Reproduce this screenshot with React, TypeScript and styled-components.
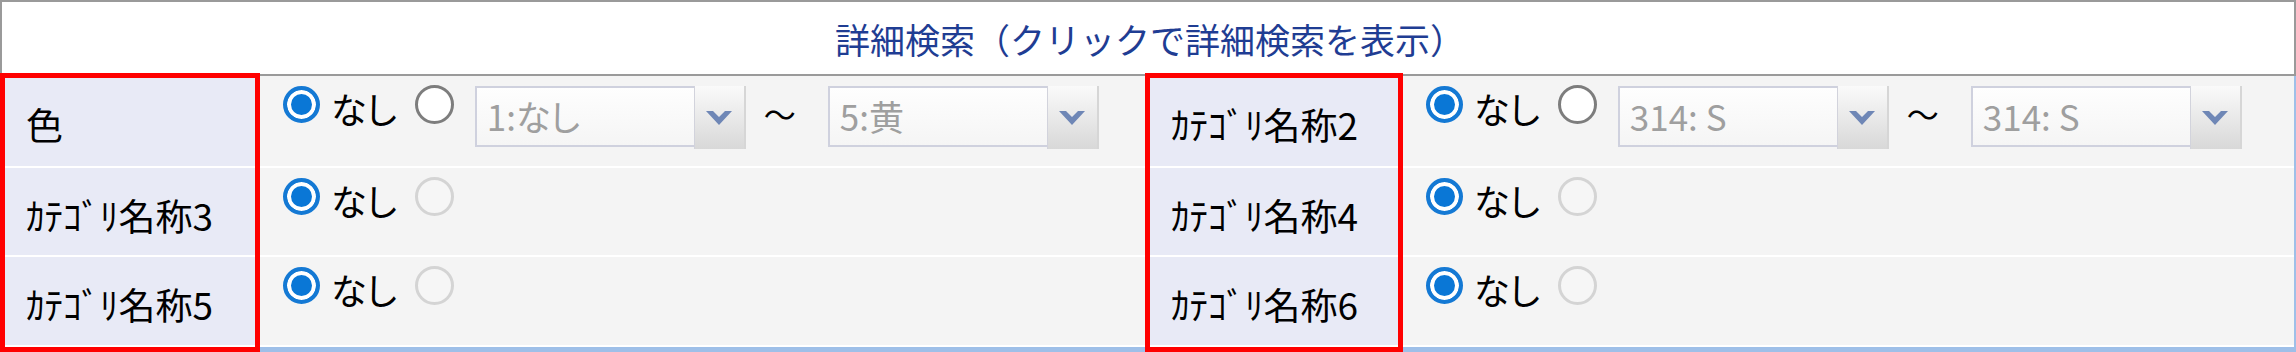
import React from 'react';
import styled, { createGlobalStyle } from 'styled-components';

const GlobalStyle = createGlobalStyle`
    body {
        margin: 0;
        background: #ffffff;
        font-family: 'Noto Sans CJK JP', 'Liberation Sans', sans-serif;
    }
`;

interface IFilterRow {
    label: string;
    range?: [string, string];
}

const rows: [IFilterRow, IFilterRow][] = [
    [
        { label: '色', range: ['1:なし', '5:黄'] },
        { label: 'ｶﾃｺﾞﾘ名称2', range: ['314: S', '314: S'] },
    ],
    [{ label: 'ｶﾃｺﾞﾘ名称3' }, { label: 'ｶﾃｺﾞﾘ名称4' }],
    [{ label: 'ｶﾃｺﾞﾘ名称5' }, { label: 'ｶﾃｺﾞﾘ名称6' }],
];

function Chevron(): JSX.Element {
    return (
        <svg width="26" height="14" viewBox="0 0 26 14">
            <polygon points="0,0 7,0 13,6 19,0 26,0 13,14" fill="#6f87b6" />
        </svg>
    );
}

function SelectBox({ value }: { value: string }): JSX.Element {
    return (
        <Select>
            <SelectValue>{value}</SelectValue>
            <SelectButton>
                <Chevron />
            </SelectButton>
        </Select>
    );
}

function FilterCell({ row, col, item }: { row: number; col: number; item: IFilterRow }): JSX.Element {
    return (
        <>
            <Label $row={row} $col={col}>
                {item.label}
            </Label>
            <Value $row={row} $col={col + 1}>
                <Radio $checked />
                <OptionText>なし</OptionText>
                <Radio $disabled={!item.range} />
                {item.range && (
                    <>
                        <SelectBox value={item.range[0]} />
                        <Tilde>〜</Tilde>
                        <SelectBox value={item.range[1]} />
                    </>
                )}
            </Value>
        </>
    );
}

export default function App(): JSX.Element {
    return (
        <>
            <GlobalStyle />
            <Panel>
                <Header>詳細検索（クリックで詳細検索を表示）</Header>
                <Body>
                    {rows.map((pair, i) => (
                        <React.Fragment key={i}>
                            <FilterCell row={i + 1} col={1} item={pair[0]} />
                            <FilterCell row={i + 1} col={3} item={pair[1]} />
                        </React.Fragment>
                    ))}
                    <Highlight $col={1} />
                    <Highlight $col={3} />
                </Body>
            </Panel>
        </>
    );
}

const Panel = styled.div`
    width: 2296px;
`;

const Header = styled.div`
    box-sizing: border-box;
    height: 76px;
    border: 2px solid #9a9a9a;
    background: #ffffff;
    display: flex;
    align-items: center;
    justify-content: center;
    padding-left: 4px;
    color: #1f3d93;
    font-size: 35px;
`;

const Body = styled.div`
    display: grid;
    grid-template-columns: 260px 885px 258px 1fr;
    grid-template-rows: 92px 89px 90px;
    border-right: 2px solid #9ebfe8;
    border-bottom: 5px solid #9ebfe8;
`;

const Label = styled.div<{ $row: number; $col: number }>`
    grid-row: ${(p) => p.$row};
    grid-column: ${(p) => p.$col};
    box-sizing: border-box;
    display: flex;
    align-items: center;
    padding: 6px 0 0 26px;
    background: #e8eaf6;
    border-bottom: 2px solid #ffffff;
    color: #000000;
    font-size: 37px;
    font-feature-settings: 'palt';
    white-space: nowrap;
`;

const Value = styled.div<{ $row: number; $col: number }>`
    grid-row: ${(p) => p.$row};
    grid-column: ${(p) => p.$col};
    box-sizing: border-box;
    display: flex;
    align-items: flex-start;
    padding: 10px 0 0 23px;
    background: #f4f4f4;
    border-bottom: 2px solid #ffffff;
`;

const Highlight = styled.div<{ $col: number }>`
    grid-row: 1 / 4;
    grid-column: ${(p) => p.$col};
    margin: -3px 0 -5px 0;
    border: 5px solid #ff0000;
    z-index: 1;
    pointer-events: none;
`;

const Radio = styled.span<{ $checked?: boolean; $disabled?: boolean }>`
    box-sizing: border-box;
    flex: none;
    border-radius: 50%;
    ${(p) =>
        p.$checked
            ? `
        width: 37px;
        height: 37px;
        border: 4px solid #1479d4;
        background: #0a77d6;
        box-shadow: inset 0 0 0 4px #ffffff;
    `
            : `
        width: 39px;
        height: 39px;
        margin-top: -1px;
        border: 3px solid ${p.$disabled ? '#d4d4d4' : '#7d7d7d'};
        background: ${p.$disabled ? '#f6f6f6' : '#ffffff'};
    `}
`;

const OptionText = styled.span`
    margin: 0 18px 0 11px;
    color: #000000;
    font-size: 36px;
    line-height: 44px;
    font-feature-settings: 'palt';
`;

const Select = styled.div`
    box-sizing: border-box;
    flex: none;
    display: flex;
    width: 269px;
    height: 61px;
    margin-left: 21px;
    border: 2px solid #cfd1de;
    background: linear-gradient(#fefefe, #f5f5f5);
`;

const SelectValue = styled.span`
    flex: 1;
    padding-left: 10px;
    color: #9f9f9f;
    font-size: 35px;
    line-height: 56px;
    font-feature-settings: 'palt';
    white-space: nowrap;
`;

const SelectButton = styled.span`
    box-sizing: border-box;
    display: flex;
    align-items: center;
    justify-content: center;
    width: 52px;
    margin: -2px -4px -4px 0;
    border-left: 1px solid #d2d3dc;
    border-right: 2px solid #d6d6d6;
    background: linear-gradient(#fafafa, #d8d8d8);
`;

const Tilde = styled.span`
    margin: 0 11px 0 20px;
    color: #000000;
    font-size: 32px;
    line-height: 54px;
`;
